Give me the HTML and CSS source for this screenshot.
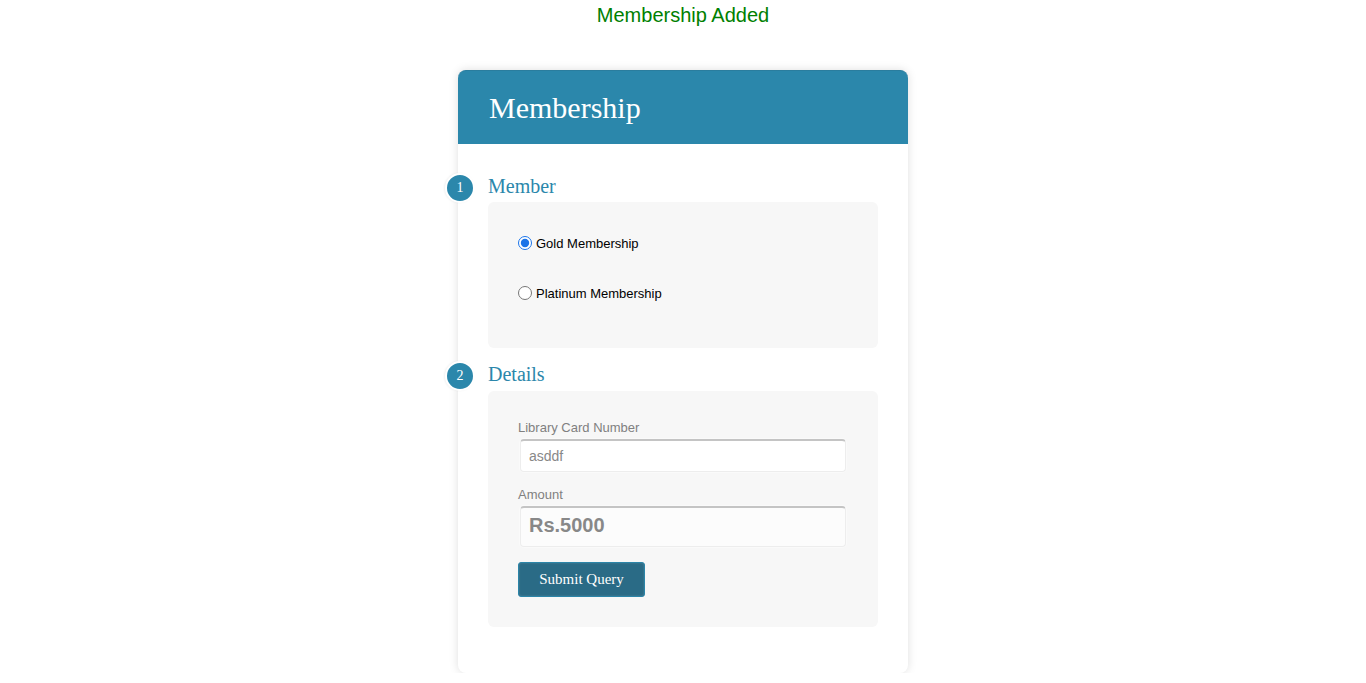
FILE: index.html
```html
<!DOCTYPE html>
<html>
<head>
<meta charset="utf-8">
<title>Membership</title>
<link rel="stylesheet" href="styles.css">
</head>
<body>
<div class="message">Membership Added</div>
<form class="card">
  <div class="card-header"><h1>Membership</h1></div>
  <div class="card-body">
    <div class="section">
      <h2 class="section-title"><span class="step">1</span>Member</h2>
      <div class="section-box radios">
        <label class="radio-row"><input type="radio" name="m" checked> Gold Membership</label>
        <label class="radio-row"><input type="radio" name="m"> Platinum Membership</label>
      </div>
    </div>
    <div class="section">
      <h2 class="section-title"><span class="step">2</span>Details</h2>
      <div class="section-box fields">
        <label class="field-label">Library Card Number</label>
        <input class="text-input" type="text" value="asddf">
        <label class="field-label second">Amount</label>
        <input class="text-input amount" type="text" value="Rs.5000">
        <button class="submit" type="button">Submit Query</button>
      </div>
    </div>
  </div>
</form>
</body>
</html>
```
FILE: styles.css
```css
html, body {
  margin: 0;
  padding: 0;
  background: #fff;
}
body {
  font-family: "Liberation Sans", Arial, sans-serif;
}
.message {
  text-align: center;
  color: #008000;
  font-size: 20px;
  line-height: 23px;
  padding-top: 4px;
}
.card {
  display: block;
  width: 450px;
  margin: 43px auto 0;
  background: #fff;
  border-radius: 8px;
  box-shadow: 0 0 10px rgba(0, 0, 0, 0.13);
}
.card-header {
  background: #2b87ab;
  border-radius: 8px 8px 0 0;
  border-top: 1px solid #2a7d9e;
  height: 74px;
  padding-left: 31px;
  box-sizing: border-box;
}
.card-header h1 {
  margin: 0;
  padding-top: 20px;
  font-family: "Liberation Serif", "Times New Roman", serif;
  font-weight: normal;
  font-size: 30px;
  line-height: 34px;
  color: #fff;
}
.card-body {
  padding: 29px 30px 46px 30px;
}
.section-title {
  position: relative;
  margin: 0 0 3px 0;
  font-family: "Liberation Serif", "Times New Roman", serif;
  font-weight: normal;
  font-size: 20px;
  line-height: 26px;
  height: 26px;
  color: #2b87ab;
}
.section + .section .section-title {
  margin-top: 13px;
  margin-bottom: 4px;
}
.step {
  position: absolute;
  left: -43px;
  top: 0;
  width: 26px;
  height: 26px;
  border-radius: 50%;
  background: #2b87ab;
  border: 2px solid #fff;
  box-shadow: -1px 0 2px rgba(0,0,0,0.06);
  color: #fff;
  font-family: "Liberation Serif", "Times New Roman", serif;
  font-size: 14px;
  line-height: 26px;
  text-align: center;
}
.section-box {
  background: #f7f7f7;
  border-radius: 6px;
}
.radios {
  display: flex;
  flex-direction: column;
  gap: 28px;
  padding: 30px 30px 44px 30px;
}
.radio-row {
  display: flex;
  align-items: center;
  height: 22px;
  font-size: 13px;
  color: #000;
}
.radio-row input {
  margin: 0 4px 0 0;
  width: 14px;
  height: 14px;
  accent-color: #1a73e8;
}
.fields {
  display: flex;
  flex-direction: column;
  align-items: flex-start;
  padding: 29px 30px 30px 30px;
}
.field-label {
  font-size: 13px;
  line-height: 16px;
  color: #808080;
}
.field-label.second {
  margin-top: 15px;
}
.text-input {
  box-sizing: border-box;
  width: 326px;
  height: 33px;
  margin: 3px 0 0 2px;
  padding: 0 8px 1px;
  border: 1px solid #ededed;
  border-top: 2px solid #c4c4c4;
  border-radius: 4px;
  background: #fff;
  font-family: "Liberation Sans", Arial, sans-serif;
  font-size: 14px;
  color: #888;
  box-shadow: 0 0 0 1px #fafafa;
  outline: none;
}
.text-input.amount {
  height: 41px;
  padding-bottom: 4px;
  background: #fcfcfc;
  font-size: 20px;
  font-weight: bold;
}
.submit {
  margin-top: 15px;
  width: 127px;
  height: 35px;
  background: #2a6b86;
  border: 1px solid #2b85a8;
  border-radius: 3px;
  color: #fff;
  font-family: "Liberation Serif", "Times New Roman", serif;
  font-size: 15px;
  padding: 0;
  box-shadow: inset 0 0 2px rgba(255,255,255,0.2);
}
```
